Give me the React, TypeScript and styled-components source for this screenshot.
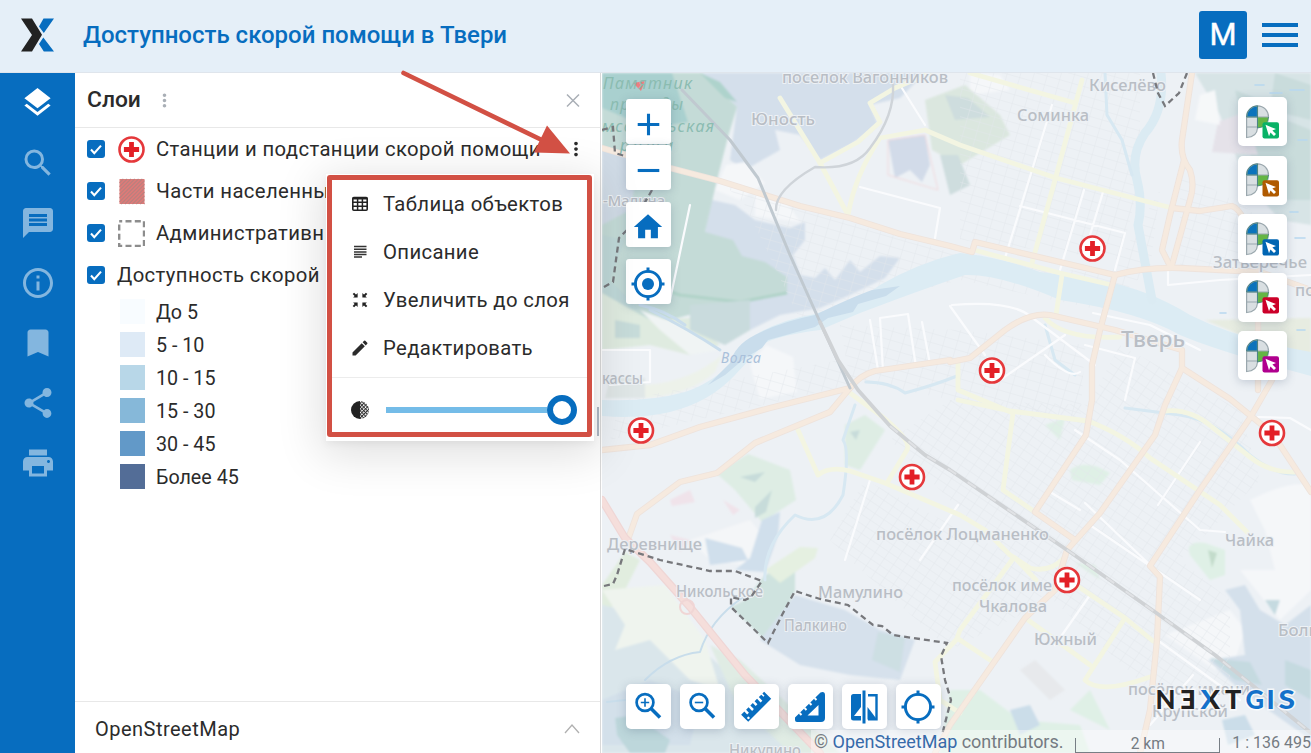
import React from "react";
import styled, { createGlobalStyle } from "styled-components";
import {
  MdLayers, MdSearch, MdMessage, MdInfoOutline, MdBookmark, MdShare, MdPrint,
  MdMoreVert, MdHome, MdEdit, MdAdd, MdRemove,
} from "react-icons/md";

const BLUE = "#076dbf";

const Global = createGlobalStyle`
  * { box-sizing: border-box; }
  body { margin: 0; overflow: hidden; font-family: Roboto, "Liberation Sans", sans-serif; color: #2b2b2b; background: #fff; }
  svg { display: block; flex: none; }
`;

const Page = styled.div`
  width: 1311px;
  height: 753px;
  display: flex;
  flex-direction: column;
  position: relative;
  overflow: hidden;
`;
const Header = styled.header`
  height: 73px;
  flex: none;
  display: flex;
  align-items: center;
  padding: 0 13px 2px 21px;
  background: #e5eff8;
  border-bottom: 1px solid #dfe5ec;
`;
const Title = styled.h1`
  flex: 1;
  margin: 0 0 0 29px;
  font-size: 24px;
  font-weight: 500;
  color: ${BLUE};
  white-space: nowrap;
`;
const Avatar = styled.div`
  width: 48px;
  height: 48px;
  border-radius: 3px;
  background: ${BLUE};
  color: #fff;
  font-size: 31px;
  font-weight: 400;
  -webkit-text-stroke: 0.4px #fff;
  line-height: 47px;
  text-align: center;
`;
const Burger = styled.button`
  margin-left: 15px;
  padding: 0;
  border: 0;
  background: none;
  width: 36px;
  display: flex;
  flex-direction: column;
  gap: 6px;
`;
const BurgerLine = styled.span`
  height: 4px;
  background: ${BLUE};
`;
const Body = styled.div`
  flex: 1;
  min-height: 0;
  display: flex;
`;
const Sidebar = styled.nav`
  width: 75px;
  background: ${BLUE};
  display: flex;
  flex-direction: column;
`;
const SideItem = styled.button<{ $active?: boolean }>`
  height: 60.1px;
  padding: 0 0 1px;
  border: 0;
  background: none;
  display: flex;
  align-items: center;
  justify-content: center;
  color: ${(p) => (p.$active ? "#fff" : "#83b6df")};
`;
const Panel = styled.section`
  width: 526px;
  border-right: 1px solid #d9d9d9;
  display: flex;
  flex-direction: column;
  background: #fff;
`;
const PanelHead = styled.div`
  height: 55px;
  border-bottom: 1px solid #e8e8e8;
  display: flex;
  align-items: center;
  padding: 0 18px 0 12px;
`;
const PanelTitle = styled.h2`
  margin: 0 0 1px;
  flex: none;
  font-size: 22.8px;
  font-weight: 500;
`;
const HeadMenu = styled.span`
  flex: 1;
  padding: 1px 0 0 13px;
  color: #a9afb6;
`;
const Tree = styled.div`
  flex: 1;
  display: flex;
  flex-direction: column;
`;
const LayerRow = styled.div`
  height: 42px;
  display: flex;
  align-items: center;
  padding: 0 13px 0 12px;
  font-size: 20.3px;
  letter-spacing: 0.38px;
  white-space: nowrap;
`;
const LayerName = styled.span<{ $gap: number }>`
  flex: 1;
  margin-left: ${(p) => p.$gap}px;
`;
const Check = styled.span`
  width: 18px;
  height: 18px;
  flex: none;
  border-radius: 3px;
  background: ${BLUE};
  margin-right: 13px;
`;
const Legends = styled.div`
  margin-top: -1px;
`;
const Legend = styled.div`
  height: 33px;
  display: flex;
  align-items: center;
  padding-left: 45px;
  font-size: 19.7px;
`;
const LegendText = styled.span`
  margin: 1px 0 0 11px;
`;
const Swatch = styled.span<{ $color: string }>`
  width: 25px;
  height: 25px;
  background: ${(p) => p.$color};
`;
const Basemap = styled.div`
  height: 52px;
  flex: none;
  border-top: 1px solid #e8e8e8;
  display: flex;
  align-items: center;
  justify-content: space-between;
  padding: 3px 19px 0 20px;
  font-size: 20px;
  letter-spacing: 0.48px;
`;

const MapArea = styled.main`
  flex: 1;
  margin-left: 1px;
  position: relative;
  overflow: hidden;
  background: #edf1f5;
`;
const MapButtons = styled.div<{ $x: number; $y: number; $column?: boolean; $gap: number }>`
  position: absolute;
  left: ${(p) => p.$x}px;
  top: ${(p) => p.$y}px;
  display: flex;
  flex-direction: ${(p) => (p.$column ? "column" : "row")};
  gap: ${(p) => p.$gap}px;
`;
const MapButton = styled.button<{ $size?: number; $radius?: number; $after?: number; $drop?: number }>`
  width: ${(p) => p.$size ?? 45}px;
  height: ${(p) => p.$size ?? 45}px;
  margin: 0 0 ${(p) => p.$after ?? 0}px;
  padding: ${(p) => p.$drop ?? 0}px 1px 0 0;
  border: 0;
  border-radius: ${(p) => p.$radius ?? 3}px;
  background: #fff;
  color: ${BLUE};
  display: flex;
  align-items: center;
  justify-content: center;
  box-shadow: 0 2px 10px rgba(60, 80, 110, 0.25);
`;
const Attribution = styled.div`
  position: absolute;
  right: 0;
  bottom: 0;
  width: 500px;
  height: 23px;
  padding-left: 3px;
  display: flex;
  align-items: center;
  background: rgba(255, 255, 255, 0.4);
  color: #757b82;
  font-size: 18px;
  white-space: nowrap;
`;
const Credit = styled.span`
  width: 262px;
  letter-spacing: -0.03px;
  a { color: #376aa9; }
`;
const ScaleLine = styled.span`
  width: 146px;
  height: 15px;
  margin: 7px 0 0 1px;
  border: 1px solid #777e85;
  border-top: 0;
  font-size: 15.6px;
  line-height: 13px;
  text-align: center;
`;
const ScaleText = styled.span`
  margin: 2px 0 0 12px;
  font-size: 16px;
`;
const Popup = styled.div`
  position: absolute;
  left: 326px;
  top: 174px;
  width: 268px;
  height: 267px;
  padding: 1px 2px 4px 1px;
  background: #fff;
  box-shadow: 0 9px 42px 6px rgba(0, 0, 0, 0.12), 0 3px 8px rgba(0, 0, 0, 0.05);
`;
const Highlight = styled.div`
  height: 262px;
  border: 5px solid #d25044;
  border-radius: 3px;
  display: flex;
  flex-direction: column;
`;
const MenuItem = styled.div`
  height: 48px;
  display: flex;
  align-items: center;
  gap: 13px;
  padding-left: 18px;
  font-size: 20.3px;
  letter-spacing: 0.36px;
  white-space: nowrap;
`;
const SliderRow = styled.div`
  flex: 1;
  margin-top: 5px;
  border-top: 1px solid #ececec;
  display: flex;
  align-items: center;
  padding: 10px 10px 0 18px;
`;
const Track = styled.div`
  width: 162px;
  height: 6px;
  margin-left: 16px;
  background: #74bce8;
`;
const Knob = styled.div`
  width: 30px;
  height: 30px;
  border: 6px solid ${BLUE};
  border-radius: 50%;
  background: #fff;
`;
const Thumb = styled.div`
  position: absolute;
  left: 597px;
  top: 407px;
  width: 2px;
  height: 29px;
  background: #a4adb9;
`;
const Arrow = styled.svg`
  position: absolute;
  left: 395px;
  top: 65px;
`;

const Checked = () => (
  <Check>
    <svg width="18" height="18" viewBox="0 0 18 18">
      <path d="M4 9.5l3.3 3.6L14 5.6" fill="none" stroke="#fff" strokeWidth="2.1" />
    </svg>
  </Check>
);

const Cross = () => (
  <>
    <circle r="12" fill="#fff" stroke="#e5383b" strokeWidth="2.6" />
    <path d="M0-7.6V7.6M-7.6 0H7.6" stroke="#e31f26" strokeWidth="4.8" />
  </>
);

const AmbulanceSymbol = () => (
  <svg width="27" height="27" viewBox="-13.5 -13.5 27 27"><Cross /></svg>
);
const HatchSymbol = () => (
  <svg width="27" height="27" viewBox="0 0 27 27">
    <rect x="1.5" y="1" width="25" height="25" fill="#df7a78" />
    <g stroke="#b9817e" strokeWidth="1.1">
      {Array.from({ length: 13 }, (_, i) => {
        const s = 3.8 * (i + 1);
        const x1 = Math.max(1.5, 1.5 + s - 25);
        const x2 = Math.min(26.5, 1.5 + s);
        return <path key={i} d={`M${x1} ${1 + s - (x1 - 1.5)}L${x2} ${1 + s - (x2 - 1.5)}`} />;
      })}
    </g>
  </svg>
);
const DashSymbol = () => (
  <svg width="27" height="27" viewBox="0 0 27 27">
    <rect x="1.2" y="1.2" width="24.8" height="24.8" fill="none" stroke="#8d8d8d" strokeWidth="2.4" strokeDasharray="6 3.3" strokeDashoffset="3" />
  </svg>
);

const LogoMark = () => (
  <svg width="33" height="34" viewBox="0 0 33 34">
    <path d="M0 .5H11L21 16.8 11 33.5H0L11 17z" fill="#222" />
    <path d="M33 .5H22.5L18 8.5 22.8 15z M33 33.5H22.8L18 26 22.3 19.5z" fill={BLUE} />
  </svg>
);

const TableIcon = () => (
  <svg width="20" height="20" viewBox="0 0 20 20">
    <rect x="2.8" y="3.6" width="14.4" height="12.6" rx="1" fill="none" stroke="#222" strokeWidth="1.6" />
    <path d="M2.8 4.4h14.4" stroke="#222" strokeWidth="2.2" />
    <path d="M2.8 8.2h14.4M2.8 12.2h14.4M7.6 4v12M12.4 4v12" stroke="#222" strokeWidth="1.5" />
  </svg>
);
const TextIcon = () => (
  <svg width="20" height="20" viewBox="0 0 20 20">
    <path d="M4 4.5h12.5M4 7.2h12.5M4 9.9h12.5M4 12.6h12.5M4 15h8" stroke="#333" strokeWidth="1.5" />
  </svg>
);
const ZoomToIcon = () => (
  <svg width="20" height="20" viewBox="-10 -10 20 20">
    {[0, 90, 180, 270].map((a) => (
      <g key={a} transform={`rotate(${a})`}>
        <path d="M2.4-6.9V-2.4H6.9z" fill="#222" />
        <path d="M3.5-3.5L6.6-6.6" stroke="#222" strokeWidth="2" />
      </g>
    ))}
  </svg>
);
const OpacityIcon = () => (
  <svg width="20" height="20" viewBox="-10 -10 20 20">
    <defs>
      <pattern id="dots" width="2.6" height="2.6" patternUnits="userSpaceOnUse" patternTransform="rotate(45)">
        <rect width="1.1" height="2.6" fill="#333" />
        <rect width="2.6" height="0.9" fill="#333" />
      </pattern>
    </defs>
    <path d="M0-9A9 9 0 0 0 0 9z" fill="#222" />
    <path d="M0-9A9 9 0 0 1 0 9z" fill="url(#dots)" />
  </svg>
);

const Magnifier = ({ plus }: { plus?: boolean }) => (
  <svg width="35" height="35" viewBox="0 0 35 35" fill="none" stroke="currentColor">
    <circle cx="14" cy="13.5" r="8.4" strokeWidth="2.7" />
    <path d="M20 19.5L29 28.5" strokeWidth="3.6" />
    <path d={plus ? "M9.8 13.5h8.4M14 9.3v8.4" : "M9.8 13.5h8.4"} strokeWidth="1.6" />
  </svg>
);
const Target = ({ dot }: { dot?: boolean }) => (
  <svg width="34" height="34" viewBox="-17 -17 34 34">
    <circle r="12.6" fill="none" stroke="currentColor" strokeWidth="2.9" />
    <path d="M0-16.5v5M0 16.5v-5M-16.5 0h5M16.5 0h-5" stroke="currentColor" strokeWidth="3" />
    {dot && <circle r="6" fill="currentColor" />}
  </svg>
);
const RulerIcon = () => (
  <svg width="34" height="34" viewBox="-17 -17 34 34">
    <g transform="rotate(-45)">
      <path fill="currentColor" d="M-16-5H-11.5V-1H-9V-5H-5.5V0H-3V-5H.5V-1H3V-5H6.5V0H9V-5H12.5V-2H14V-5H16.5V5H-16z" />
      <circle cx="-13" cy="2.3" r="1.3" fill="#fff" />
    </g>
  </svg>
);
const SquareIcon = () => (
  <svg width="34" height="34" viewBox="0 0 34 34">
    <path fill="currentColor" fillRule="evenodd" d="M2 30V27.5L27.5 2.4Q32 1 32 5V28Q32 32 28 32H4Q2 32 2 30zM14.5 25.5H25.5V15z" />
    <path d="M6.5 23l2 2M11.5 18l2 2M16.5 13l2 2M21.5 8l2 2" stroke="#fff" strokeWidth="2" />
  </svg>
);
const CompareIcon = () => (
  <svg width="34" height="34" viewBox="0 0 34 34">
    <path fill="currentColor" d="M6.5 4H14V30.5H6.5Q4 30.5 4 28V6.5Q4 4 6.5 4zM15.5.5h3v33h-3z" />
    <path d="M7 26L14 17V26z" fill="#fff" />
    <path d="M21 5.3H29.5V29.3H21" fill="none" stroke="currentColor" strokeWidth="2.4" />
    <path d="M20.5 17L30 29.5H20.5z" fill="currentColor" />
  </svg>
);
const IdentifyIcon = ({ color }: { color: string }) => (
  <svg width="33" height="34" viewBox="0 0 33 34">
    <path d="M.6 12A11 11 0 0 1 11.5.8C18 .8 22.5 6 22.5 12Q22.5 22 11.5 23 11 32 .6 32.5z" fill="#d9dfe2" />
    <path d="M.6 12A11 11 0 0 1 11.5.8V12z" fill="#0b73bb" />
    <path d="M11.5 12H22.5Q22.5 22 11.5 23z" fill="#64b544" />
    <path d="M.6 12A11 11 0 0 1 11.5.8C18 .8 22.5 6 22.5 12H.6V32.5Q11 32 11.5 23V1M.6 22H11.5" fill="none" stroke="#9aa7ad" strokeWidth="1.2" />
    <path d="M22.5 12Q22.5 22 11.5 23V12M.6 12A11 11 0 0 1 11.5.8V12z" fill="none" stroke="#397c7b" strokeWidth=".8" />
    <rect x="16.5" y="17.3" width="16.5" height="16.3" rx="2" fill={color} />
    <path d="M19.5 19.8L30 24.1 26.4 25.5 30 29.1 28 31.1 24.5 27.6 23 31.2z" fill="#fff" />
  </svg>
);

const ORANGE_ROADS = [
  "M602 148L670 168L720 181L800 206L850 218L900 234L950 246L972 252L975 242L1115 275",
  "M1192 73L1182 140Q1180 158 1190 170Q1195 185 1190 200L1172 265",
  "M1184 160L1170 215L1162 250L1170 266",
  "M1115 275Q1145 267 1180 268L1260 272L1311 290",
  "M1172 208L1200 211L1232 206Q1245 210 1258 260V390",
  "M1115 275L1100 330L1092 365V400L1086 435L1035 512L1075 540",
  "M950 362L970 358L1005 330Q1030 312 1050 315L1115 330L1182 350V368L1230 399L1272 433L1311 492",
  "M1182 368L1165 405L1155 435L1100 513L1067 550L1055 590L1025 618L950 725L935 753",
  "M1272 380L1250 418L1200 490L1150 566L1160 577L1157 640L1150 710L1140 753",
  "M602 450L650 445L700 427L770 408L850 388",
  "M626 545L637 514L680 482L717 473L755 443L830 412L850 388Q860 375 875 371L950 360",
];
const YELLOW_ROADS = [
  "M780 98L820 163L848 215Q855 175 880 138L925 130L960 145L1056 178L1172 208",
  "M820 163L858 142L880 122L870 103L895 88L930 73",
  "M970 73L1075 103M1082 80L1055 180L1032 263M1062 275L1056 315",
  "M974 250L1060 273L1112 285",
  "M1045 318Q1065 340 1120 337",
  "M797 428L818 475Q830 466 850 471L885 483L960 515L985 530L1010 555L1030 568Q1050 573 1064 558",
  "M850 393L880 415Q912 440 907 450L887 483M958 360V390L1013 413L1003 490L1035 512",
  "M958 400L1010 411L1088 421Q1125 435 1150 458L1220 505L1247 532",
  "M1164 411Q1190 408 1212 427L1250 457Q1270 473 1295 472",
  "M1070 581L1125 618L1085 680Q1100 695 1150 677M1028 620L1090 665M1125 618L1153 641",
  "M1012 560L960 630L957 638L990 660M1015 558L1036 580M958 638L935 662L940 700L960 713",
];
const MINOR_ROADS = "M900 85L925 125M860 187L940 208L935 238M1052 105L1005 258M1020 206L1125 233L1115 270M1084 190L1060 270M1103 192L1090 235M870 320L878 370M883 371L880 318L908 314L916 367M922 322L930 364M602 350L650 350V382L610 385M952 305Q1010 300 1030 316L1095 365M985 355L950 306M1000 380L1065 335M1093 313L1150 325L1200 350M1085 345L1135 358L1125 400M1045 355Q1070 380 1080 372M920 560L958 505M870 480L845 560M1050 492L1080 510M1075 430L1120 460L1200 530L1225 532M1200 442L1158 505M1085 503L1150 565M1090 525L1200 600M1090 595L1055 645M1160 642L1240 700M1193 675L1150 725M1168 270V285L1220 280L1311 275M1258 417L1290 418L1311 430M690 205L670 300";

const PLACES: [string, number, number, number, number][] = [
  ["посёлок Вагонников", 782, 83, 166, 16], ["Юность", 751, 125, 64, 16], ["Соминка", 1017, 121, 72, 16],
  ["Киселёво", 1089, 91, 77, 16], ["Затверечье", 1213, 268, 94, 16], ["Тверь", 1121, 347, 64, 22],
  ["-Малина", 603, 206, 62, 15], ["кассы", 602, 384, 41, 16], ["Деревнище", 607, 550, 95, 16],
  ["посёлок Лоцманенко", 876, 540, 173, 16], ["Чайка", 1225, 546, 49, 16], ["посёлок име", 952, 591, 100, 16],
  ["Чкалова", 979, 612, 68, 16], ["Южный", 1034, 645, 63, 16], ["Никольское", 676, 597, 87, 16],
  ["Мамулино", 818, 598, 85, 16], ["Палкино", 784, 631, 63, 16], ["Никулино", 729, 756, 72, 16],
  ["посёлок имени", 1128, 695, 122, 16], ["Крупской", 1152, 717, 76, 16], ["Боль", 1278, 636, 40, 16], ["по", 1295, 296, 20, 16],
];
const STATIONS = [[1092.5, 248.5], [992, 370.5], [641, 430.5], [1272, 433], [912, 477], [1067, 580]];
const BOUNDARY = "M602 130L613 127L615 153L628 157M652 190L644 204M627 230L619 238L613 282L602 288M1153 73L1158 93L1165 106L1179 93L1187 73M604 586L613 584L617 575L625 549L660 560L710 571L735 571L762 581L751 597L745 600L731 597V607L768 643L782 615L795 591L820 599L848 605L873 625L882 626L893 635L947 643L941 656L945 680L951 700L942 735";

const CityMap = () => (
  <svg width="709" height="680" viewBox="602 73 709 680">
    <defs>
      <pattern id="streets" width="13" height="9" patternUnits="userSpaceOnUse" patternTransform="rotate(16)">
        <path d="M0 0H13M0 0V9" stroke="#e2e6eb" strokeWidth=".9" fill="none" />
      </pattern>
      <pattern id="streets2" width="11" height="8" patternUnits="userSpaceOnUse" patternTransform="rotate(34)">
        <path d="M0 0H11M0 0V8" stroke="#e2e6eb" strokeWidth=".9" fill="none" />
      </pattern>
      <filter id="soften"><feGaussianBlur stdDeviation="1.1" /></filter>
      <linearGradient id="xfill"><stop offset=".5" stopColor="#1471ca" /><stop offset=".5" stopColor="#222" /></linearGradient>
    </defs>
    <rect x="602" y="73" width="709" height="680" fill="#edf1f5" />
    <g filter="url(#soften)">
      <path d="M702 73H925L900 98L870 105L878 125L850 145L820 160L800 135L775 130L780 150L745 170L730 160L737 107z" fill="#d4dfeb" />
      <path d="M712 200L735 205L755 220L790 228L805 222L805 240L793 255L800 275L815 278L825 268L835 280L850 260L860 272L880 256L900 258L885 278L850 295L820 308L780 315L740 335L725 320L740 300L705 232z" fill="#d4dfeb" />
      <path d="M888 140L925 135L930 165L922 182L910 170L895 178z" fill="#d2dbe9" />
      <path d="M888 140L925 135L938 190L888 175z" fill="none" stroke="#f0d8dc" />
      <path d="M602 73H702L737 107L728 137L717 180L705 232L733 240L742 256L765 262L787 277V293L740 302L650 325L602 330z" fill="#c4dbd7" />
      <path d="M650 285L680 295L740 302L787 293" fill="none" stroke="#b0d3c8" strokeWidth="3" />
      <path d="M602 73H672L688 122L650 128L602 108z" fill="#a9d0cf" />
      <path d="M602 150L640 160L630 210L602 225z" fill="#d0dbe6" />
      <path d="M602 235L625 240L610 280L640 310L602 305z" fill="#bfd8d8" />
      <path d="M602 293L650 320L690 318L720 345L690 355L650 345L602 350z" fill="#dfebe0" />
      <path d="M690 305L750 300L750 330L725 345L690 330z" fill="#c9dbdd" />
      <path d="M615 320L640 325L640 338L615 338z" fill="#c7dcda" />
      <path d="M640 310L680 325L720 350L690 355L660 330z" fill="#f0f4f4" />
      <path d="M610 378H645V398H605z" fill="#e0e7e7" />
      <path d="M645 385Q690 382 722 355L715 372Q690 395 645 398z" fill="#edf2ea" />
      <path d="M700 73L720 82L737 102L725 98z" fill="#aed3cc" />
      <path d="M726 165L745 162L765 183L740 200L715 190zM755 190L785 200L800 222L755 216zM750 365L766 345L793 357L797 392L760 399zM970 73L1000 75L1010 90L970 95z" fill="#f5f7f9" />
      <path d="M925 100L965 85L1000 115L1010 135L960 165L932 150z" fill="#dbe7df" />
      <path d="M940 155L958 155L970 185L950 195zM945 95L968 98L990 117L955 120z" fill="#ceddde" />
      <path d="M1195 73H1311V225L1280 220L1245 180L1220 115z" fill="#d7e4e6" />
      <path d="M1275 73L1311 85V120L1270 110zM1235 90L1260 100L1240 110z" fill="#c9dcdc" />
      <path d="M1260 110L1311 130V200L1280 200L1250 160z" fill="#c9dcdb" />
      <path d="M1218 122L1245 112L1258 155L1212 152z" fill="#e5e2e9" />
      <path d="M1200 95L1215 90L1220 125L1195 120z" fill="#f6f8f9" />
      <path d="M1205 320L1311 318V362L1240 335z" fill="#e7ece1" />
      <path d="M716 473L748 454L790 470L796 500L762 522L735 490zM845 425L865 415L885 430L860 470L845 465z" fill="#deede4" />
      <path d="M740 477L765 472L755 482zM755 507L772 490L766 512L755 518zM850 432L860 430L856 440z" fill="#c7dcda" />
      <path d="M602 585L625 552L640 560L625 590L602 620z" fill="#e1eddf" />
      <path d="M690 540L750 520L770 545L745 565L710 560z" fill="#f4f6f8" />
      <path d="M705 538L742 548L748 560L710 565zM762 520L780 512L778 535L765 572L735 570L750 558z" fill="#d0dfec" />
      <path d="M602 605L670 620L730 675L800 753H602z" fill="#dae6eb" />
      <path d="M602 590L665 585L705 640L720 690L690 680L650 640L615 650L625 625z" fill="#eff4ee" />
      <path d="M602 700L650 680L700 700L690 745H602z" fill="#d3e0ea" />
      <path d="M615 718L635 715L670 740L665 753H630L617 735z" fill="#bdd7db" />
      <path d="M765 575L795 560L795 591L768 643L731 607L745 600z" fill="#cfe3df" />
      <path d="M795 595L845 610L880 630L915 640L900 680L850 675L800 665L760 640z" fill="#d6e1ec" />
      <path d="M765 570L800 547L818 548L815 558L780 583z" fill="#e5f0e1" />
      <path d="M710 645L740 660L800 715L840 753H790L735 700z" fill="#e0ece4" />
      <path d="M878 632L905 638L900 672L872 660z" fill="#cddfe3" />
      <path d="M1190 555Q1185 540 1205 543L1225 550L1225 575L1210 580zM1070 470Q1085 458 1110 473L1100 485L1072 480zM1045 425L1065 418L1060 440zM950 690L980 690L1020 720L1080 725L1090 753H940zM1070 710L1090 690L1110 730zM1075 563L1095 565L1100 580z" fill="#dff0e6" />
      <path d="M1250 500Q1290 480 1311 485V590L1280 620L1240 570L1275 570L1265 530zM1165 635L1230 610L1245 630L1235 660L1215 670z" fill="#f5f7f9" />
      <path d="M1225 590L1245 585L1260 610L1285 625L1311 605V740L1240 690L1208 660L1245 655L1240 610z" fill="#d4e0eb" />
      <path d="M1210 658L1250 662L1262 685L1235 680zM1265 600L1280 600L1275 615zM1285 660L1311 670V700L1285 685z" fill="#c5dae0" />
      <path d="M1208 550L1217 553L1212 568z" fill="#c3dccb" />
      <path d="M1010 710L1030 705L1040 725L1020 735zM1222 720L1245 715L1255 735L1228 745z" fill="#cbdde9" />
      <path d="M1020 670L1035 660L1065 690L1050 700z" fill="#e7e9ec" />
      <path d="M670 535L690 540L680 552zM723 500L740 510L733 515zM670 500L690 490L695 502L672 506z" fill="#f0e3ea" />
    </g>
    <path d="M725 185L970 258L1110 275L1160 190L1150 270L1100 310L960 280L800 320L745 205zM840 325L960 330L1085 345L1080 425L850 380zM960 73H1140V180L1120 260L960 240z M1180 170L1250 210L1290 270H1180zM620 400L840 360L850 385L610 440z" fill="url(#streets)" />
    <path d="M865 480L1010 555L1050 590L1020 615L950 650L850 560L830 540zM950 400L1240 410L1260 480L1180 560L1230 600L1230 690L1160 700L1010 560L890 440zM1120 345L1240 410L1080 420z" fill="url(#streets2)" />
    <path d="M602 400Q650 402 685 392C720 380 735 360 755 335Q780 320 815 314Q860 300 880 285Q920 262 960 253Q1000 257 1040 272L1100 280Q1150 290 1190 315Q1240 340 1311 352V376Q1220 352 1180 335Q1140 312 1060 300Q1000 274 965 275Q930 287 900 298L860 313L820 330Q780 335 765 343L735 375Q710 402 670 412Q640 419 602 416z" fill="#dcecf4" />
    <path d="M708 385L730 363Q735 345 755 335Q780 322 815 315Q850 298 872 290L900 286L886 296L858 304L853 312L828 318L815 327L768 340L762 348L745 358L725 375z" fill="#c9ddec" />
    <g fill="none" strokeLinecap="round" strokeLinejoin="round">
      <path d="M650 310Q690 330 720 350M640 305Q665 310 685 325" stroke="#c9ddec" strokeWidth="3" />
      <path d="M1161 73Q1165 110 1145 133Q1130 155 1137 180Q1143 205 1138 225L1152 300" stroke="#dbebf3" strokeWidth="9" />
      <path d="M1105 73L1107 115L1122 140L1132 175M765 580Q763 545 795 515Q825 530 843 495Q850 450 843 440L855 405M866 382Q890 382 905 393Q935 385 957 376M1045 325L1055 360L1075 375M1125 408L1180 415Q1215 420 1250 455Q1275 475 1295 474" stroke="#d7e8f2" strokeWidth="3" />
      <path d="M607 702L625 700M645 680Q670 655 700 652Q710 620 742 598" stroke="#c8ddeb" strokeWidth="2" />
      <path d={MINOR_ROADS} stroke="#fafbfd" strokeWidth="2.2" />
      {YELLOW_ROADS.map((d) => <path key={d} d={d} stroke="#f3f5e2" strokeWidth="4.8" />)}
      {ORANGE_ROADS.map((d) => <path key={d} d={d} stroke="#eee3dc" strokeWidth="6.3" />)}
      {ORANGE_ROADS.map((d) => <path key={d} d={d} stroke="#f6eadf" strokeWidth="4.6" />)}
      <path d="M602 500L625 538L650 562L690 607L745 675L820 753" stroke="#efd6d5" strokeWidth="8" />
      <path d="M602 500L625 538L650 562L690 607L745 675L820 753" stroke="#f5dedb" strokeWidth="5.5" />
      <circle cx="687" cy="607" r="7" stroke="#f0d6d5" strokeWidth="2" />
      <path d="M682 90L730 140L758 178L790 255L820 322L850 388" stroke="#c0c9d0" strokeWidth="3" />
      <path d="M893 84Q895 115 870 148Q855 170 815 167Q775 190 776 210" stroke="#cfd4d9" strokeWidth="2.4" />
      <path d="M820 322L838 360L858 390L890 426L925 455L950 470L1070 552L1155 612L1215 655L1311 733" stroke="#cfd2d5" strokeWidth="3.8" />
      <path d="M890 426L925 455L950 470L1070 552L1155 612L1215 655L1311 733" stroke="#e0e2e5" strokeWidth="2" strokeDasharray="10 14" strokeLinecap="butt" />
      <path d="M1270 93h12M1255 85h9M1290 90h14M1250 222h9M1290 212h8M1295 238h10M1298 140h9M1297 330h8M1220 313h6" stroke="#b8d8ef" strokeWidth="1.6" />
    </g>
    <path d="M633 83L645 81L641 91z" fill="#ec7f80" />
    <g fontFamily='"Noto Sans", "Open Sans", sans-serif' fill="#b9bec5" stroke="#edf1f5" strokeWidth="2" paintOrder="stroke" fontWeight="500">
      {PLACES.map(([t, x, y, w, s]) => (
        <text key={t + x} x={x} y={y} fontSize={s} textLength={w} lengthAdjust="spacingAndGlyphs">{t}</text>
      ))}
    </g>
    <g fontFamily='"Noto Sans", sans-serif' fontStyle="italic" fontSize="16" fill="#8bbcb1">
      <text x="603" y="89" textLength="89">Памятник</text>
      <text x="610" y="110" textLength="73">природы</text>
      <text x="602" y="132" textLength="112">мсомольская</text>
      <text x="620" y="151" textLength="53">роща</text>
      <text x="721" y="363" fontSize="14" fill="#a9c0da" textLength="40">Волга</text>
    </g>
    <path d={BOUNDARY} fill="none" stroke="#77787c" strokeWidth="2.3" strokeDasharray="6 4" />
    {STATIONS.map(([x, y]) => <g key={x} transform={`translate(${x} ${y})`}><Cross /></g>)}
    <g fontFamily="Lato, sans-serif" fontWeight="900" fontSize="27" fill="#222" stroke="#fff" strokeWidth="3" strokeOpacity=".75" paintOrder="stroke">
      <text x="1155.5" y="709" textLength="20" lengthAdjust="spacingAndGlyphs">N</text>
      <text x="1180.5" y="709" transform="rotate(180 1188.3 699.3)">E</text>
      <text x="1200.5" y="709" textLength="19.5" lengthAdjust="spacingAndGlyphs" fill="url(#xfill)">X</text>
      <text x="1225" y="709">T</text>
      <text x="1245.5" y="709" textLength="18.5" lengthAdjust="spacingAndGlyphs" fill="#1471ca">G</text>
      <text x="1266.5" y="709" fill="#1471ca">I</text>
      <text x="1278.5" y="709" textLength="16.5" lengthAdjust="spacingAndGlyphs" fill="#1471ca">S</text>
    </g>
  </svg>
);

const SIDE = [MdLayers, MdSearch, MdMessage, MdInfoOutline, MdBookmark, MdShare, MdPrint];
const LEGEND = [
  ["#f8fcff", "До 5"], ["#deeaf6", "5 - 10"], ["#b8d7e8", "10 - 15"],
  ["#86b8d9", "15 - 30"], ["#6299c8", "30 - 45"], ["#536d97", "Более 45"],
];
const IDENTIFY = ["#09b267", "#b05a00", "#0065b3", "#cc0029", "#b0008e"];

export default function App() {
  return (
    <Page>
      <Global />
      <Header>
        <LogoMark />
        <Title>Доступность скорой помощи в Твери</Title>
        <Avatar>M</Avatar>
        <Burger><BurgerLine /><BurgerLine /><BurgerLine /></Burger>
      </Header>
      <Body>
        <Sidebar>
          {SIDE.map((Icon, i) => <SideItem key={i} $active={i === 0}><Icon size={i === 0 ? 35 : 36} /></SideItem>)}
        </Sidebar>
        <Panel>
          <PanelHead>
            <PanelTitle>Слои</PanelTitle>
            <HeadMenu><MdMoreVert size={21} /></HeadMenu>
            <svg width="18" height="18" viewBox="0 0 18 18"><path d="M3 3.5l12 12M15 3.5L3 15.5" stroke="#a9afb6" strokeWidth="1.5" /></svg>
          </PanelHead>
          <Tree>
            <LayerRow><Checked /><AmbulanceSymbol /><LayerName $gap={11}>Станции и подстанции скорой помощи</LayerName><MdMoreVert size={22} /></LayerRow>
            <LayerRow><Checked /><HatchSymbol /><LayerName $gap={11}>Части населенны</LayerName></LayerRow>
            <LayerRow><Checked /><DashSymbol /><LayerName $gap={11}>Административн</LayerName></LayerRow>
            <LayerRow><Checked /><LayerName $gap={-1}>Доступность скорой</LayerName></LayerRow>
            <Legends>
              {LEGEND.map(([c, t]) => <Legend key={t}><Swatch $color={c} /><LegendText>{t}</LegendText></Legend>)}
            </Legends>
          </Tree>
          <Basemap>
            OpenStreetMap
            <svg width="18" height="18" viewBox="0 0 18 18"><path d="M2 13l7-8 7 8" fill="none" stroke="#b0b0b0" strokeWidth="1.3" /></svg>
          </Basemap>
        </Panel>
        <MapArea>
          <CityMap />
          <MapButtons $x={24} $y={26} $column $gap={1}>
            <MapButton $drop={5}><MdAdd size={37} /></MapButton>
            <MapButton $after={11} $drop={5}><MdRemove size={37} /></MapButton>
            <MapButton $after={11} $drop={4}><MdHome size={34} /></MapButton>
            <MapButton $drop={4}><Target dot /></MapButton>
          </MapButtons>
          <MapButtons $x={636} $y={24} $column $gap={9.5}>
            {IDENTIFY.map((c) => <MapButton key={c} $size={49} $radius={5}><IdentifyIcon color={c} /></MapButton>)}
          </MapButtons>
          <MapButtons $x={24} $y={611} $gap={9}>
            <MapButton $radius={5}><Magnifier plus /></MapButton>
            <MapButton $radius={5}><Magnifier /></MapButton>
            <MapButton $radius={5}><RulerIcon /></MapButton>
            <MapButton $radius={5}><SquareIcon /></MapButton>
            <MapButton $radius={5}><CompareIcon /></MapButton>
            <MapButton $radius={5}><Target /></MapButton>
          </MapButtons>
          <Attribution>
            <Credit>© <a>OpenStreetMap</a> contributors.</Credit>
            <ScaleLine>2 km</ScaleLine>
            <ScaleText>1 : 136 495</ScaleText>
          </Attribution>
        </MapArea>
      </Body>
      <Popup>
        <Highlight>
          <MenuItem><TableIcon />Таблица объектов</MenuItem>
          <MenuItem><TextIcon />Описание</MenuItem>
          <MenuItem><ZoomToIcon />Увеличить до слоя</MenuItem>
          <MenuItem><MdEdit size={20} />Редактировать</MenuItem>
          <SliderRow><OpacityIcon /><Track /><Knob /></SliderRow>
        </Highlight>
      </Popup>
      <Thumb />
      <Arrow width="180" height="95" viewBox="395 65 180 95">
        <path d="M403.5 73L548 143" stroke="#d25044" strokeWidth="4.6" strokeLinecap="round" />
        <path d="M570 153.5L547 125.5L534 152.5z" fill="#d25044" />
      </Arrow>
    </Page>
  );
}
